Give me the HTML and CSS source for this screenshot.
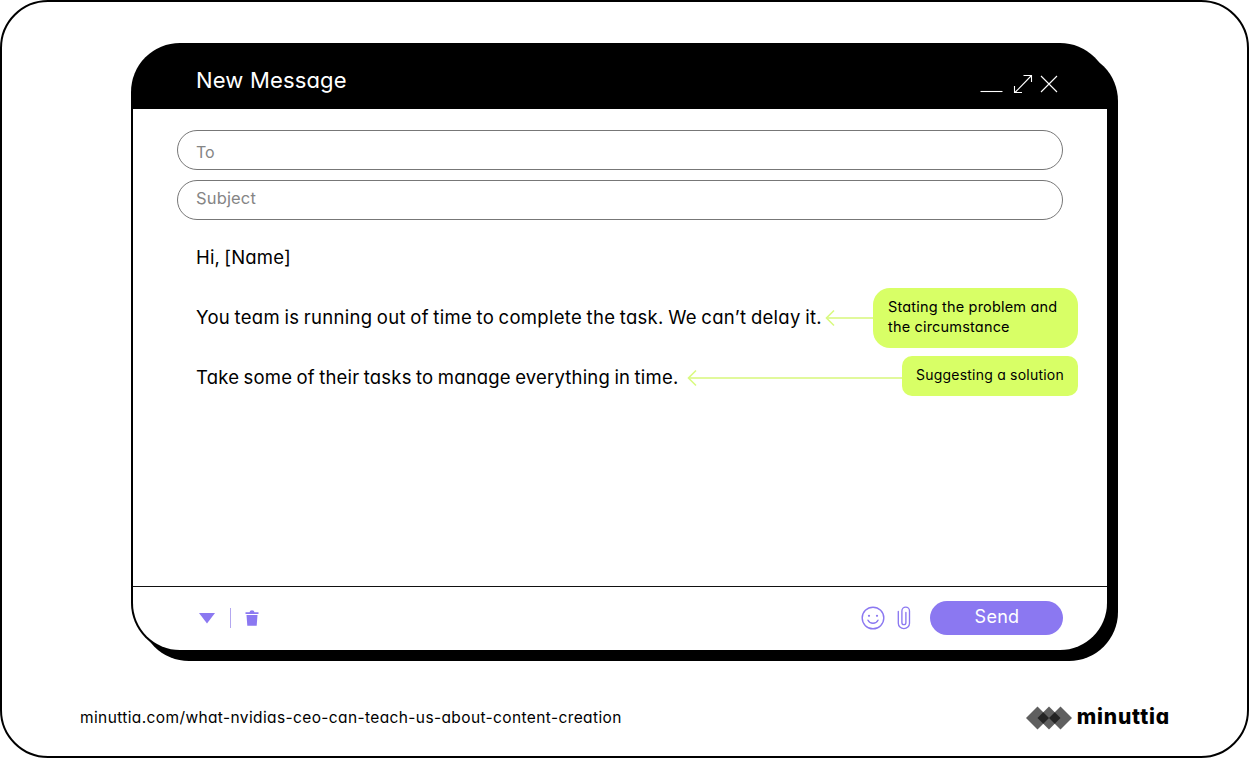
FILE: index.html
```html
<!DOCTYPE html>
<html lang="en">
<head>
<meta charset="utf-8">
<title>New Message</title>
<link rel="stylesheet" href="styles.css">
</head>
<body>
<div class="frame">
  <main class="window">
    <header class="titlebar">
      <h1 class="title"><span>New Message</span></h1>
      <svg class="controls" width="80" height="22" viewBox="0 0 80 22" fill="none" stroke="#fff" stroke-width="1.1">
        <path d="M.5 17.500H22.500"/>
        <path d="M35 18.500L51.500 1.500M43.500 1.500H51.500V8M34.500 12V18.500H42"/>
        <path d="M61 2L77 18M77 2L61 18"/>
      </svg>
    </header>
    <div class="panel">
      <section class="fields">
        <div class="field field-to"><span>To</span></div>
        <div class="field field-subject"><span>Subject</span></div>
      </section>
      <section class="message">
        <div class="line"><p class="text text-greeting"><span>Hi, [Name]</span></p></div>
        <div class="line">
          <p class="text text-problem"><span>You team is running out of time to complete the task. We can’t delay it.</span></p>
          <div class="arrow"><svg width="10" height="18" viewBox="0 0 10 18"><path d="M9 1.500L1.500 9L9 16.500"/></svg></div>
          <aside class="callout callout-problem"><span>Stating the problem and</span><span>the circumstance</span></aside>
        </div>
        <div class="line">
          <p class="text text-solution"><span>Take some of their tasks to manage everything in time.</span></p>
          <div class="arrow"><svg width="10" height="18" viewBox="0 0 10 18"><path d="M9 1.500L1.500 9L9 16.500"/></svg></div>
          <aside class="callout callout-solution"><span>Suggesting a solution</span></aside>
        </div>
      </section>
      <footer class="toolbar">
        <svg class="caret" width="18" height="12" viewBox="0 0 18 12"><path d="M1 1H17L9 11.500Z" fill="#8b78f1"/></svg>
        <i class="separator"></i>
        <svg class="trash" width="14" height="16" viewBox="0 0 14 16" fill="#8b78f1"><path d="M.5 4V2.300H4.500Q4.800.200 7 .2T9.500 2.300H13.500V4ZM1.500 5H12.500L11.700 15.800H2.300Z"/></svg>
        <svg class="smile" width="24" height="24" viewBox="0 0 24 24" fill="none" stroke="#8b78f1" stroke-width="1.400"><circle cx="12" cy="12" r="10.800"/><path d="M7 14.200Q8.500 17.300 12 17.300T17 14.200" stroke-linecap="round"/><circle cx="8" cy="9.800" r="1.100" fill="#8b78f1" stroke="none"/><circle cx="16" cy="9.800" r="1.100" fill="#8b78f1" stroke="none"/></svg>
        <svg class="clip" width="14" height="24" viewBox="0 0 14 24" fill="none" stroke="#8b78f1" stroke-width="1.350" stroke-linecap="round"><path d="M1.300 5.500V17.300A5.600 5.300 0 0 0 12.500 17.300V5A3.800 3.900 0 0 0 4.900 5V16.500A2 2.200 0 0 0 8.900 16.500V6.500"/></svg>
        <button class="send"><span>Send</span></button>
      </footer>
    </div>
  </main>
  <footer class="credits">
    <span class="url">minuttia.com/what-nvidias-ceo-can-teach-us-about-content-creation</span>
    <div class="brand">
      <svg width="46" height="24" viewBox="0 0 46 24"><g fill="#5f5f5f"><path d="M0 12L11.500.500L23 12L11.500 23.500Z"/><path d="M11.500 12L23 .5L34.500 12L23 23.500Z"/><path d="M23 12L34.500.500L46 12L34.500 23.500Z"/></g><g fill="#242424"><path d="M11.500 12L17.250 6.250L23 12L17.250 17.750Z"/><path d="M23 12L28.750 6.250L34.500 12L28.750 17.750Z"/></g></svg>
      <span class="wordmark">minuttia</span>
    </div>
  </footer>
</div>
</body>
</html>
```
FILE: styles.css
```css
* { box-sizing: border-box; }
body { margin: 0; background: #fff; color: #000; font-family: Inter, Lato, sans-serif; font-feature-settings: "cv11"; }
h1, p { margin: 0; font-weight: 400; }
span { white-space: nowrap; }
svg { display: block; flex: none; }
.frame { width: 1249px; height: 758px; border: 2px solid #000; border-radius: 48px; padding: 41px 129px 0; }
.window { position: relative; z-index: 0; width: 978px; height: 609px; display: flex; flex-direction: column; padding: 2px; border-radius: 49px; background: #000; }
/* solid drop shadow */
.window::before { content: ""; position: absolute; z-index: -1; inset: 9px -9px -9px 9px; border-radius: 49px; background: #000; }
.titlebar { height: 64px; flex: none; color: #fff; display: flex; justify-content: space-between; padding: 0 47px 0 63px; }
.title { font-size: 22px; line-height: 28px; margin-top: 21px; letter-spacing: .17px; }
.controls { margin-top: 29px; }
.panel { flex: 1; display: flex; flex-direction: column; background: #fff; border-radius: 0 0 47px 47px; }
.fields { display: flex; flex-direction: column; gap: 10px; padding: 21px 44px 0; }
.field { height: 40px; border: 1px solid #777; border-radius: 20px; padding-left: 18px; color: #858585; font-size: 16px; line-height: 20px; }
.field-to { padding-top: 11px; }
.field-subject { padding-top: 7px; font-size: 16.5px; letter-spacing: .15px; }
.message { flex: 1; padding: 8px 29px 0 63px; }
.line { height: 60px; display: flex; }
.text { font-size: 18.5px; line-height: 58px; flex: none; word-spacing: -1px; }
.text-greeting { letter-spacing: .15px; }
.text-problem { width: 629px; letter-spacing: .295px; }
.text-solution { width: 491px; letter-spacing: .19px; }
.arrow { flex: 1; height: 60px; display: flex; align-items: center; background: linear-gradient(#e1f99c, #e1f99c) 2px 29px / 100% 2px no-repeat; }
.arrow path { fill: none; stroke: #d9fa80; stroke-width: 1.600; }
.callout { background: #d8ff66; font-size: 14px; line-height: 20px; display: flex; flex-direction: column; flex: none; }
.callout-problem { width: 205px; height: 60px; border-radius: 17px; padding: 9px 0 0 15px; font-size: 14.5px; letter-spacing: .18px; }
.callout-solution { width: 176px; height: 40px; border-radius: 10px; margin-top: 8px; padding: 9px 0 0 14px; letter-spacing: .22px; }
.toolbar { height: 64px; flex: none; border-top: 1px solid #111; display: flex; align-items: center; padding: 0 44px 2px 65px; }
.separator { width: 1px; height: 20px; background: #b3a7f0; margin: 0 15px 0 14px; }
.trash { margin-left: -1px; }
.smile { margin-left: auto; }
.clip { margin: 0 19px 0 12px; }
.send { width: 133px; height: 34px; border: 0; border-radius: 17px; background: #8b78f1; color: #fff; font: inherit; font-feature-settings: inherit; font-size: 18px; line-height: 32px; padding: 0 0 2px 1px; letter-spacing: .3px; }
.credits { width: 1089px; margin: 51px 0 0 -51px; height: 28px; display: flex; justify-content: space-between; align-items: center; }
.url { font-size: 15.5px; letter-spacing: .38px; }
.brand { display: flex; align-items: center; gap: 5px; padding-top: 2px; margin-right: -1px; }
.wordmark { font-size: 21px; font-weight: 800; line-height: 24px; letter-spacing: .83px; margin-top: -2px; }
```
